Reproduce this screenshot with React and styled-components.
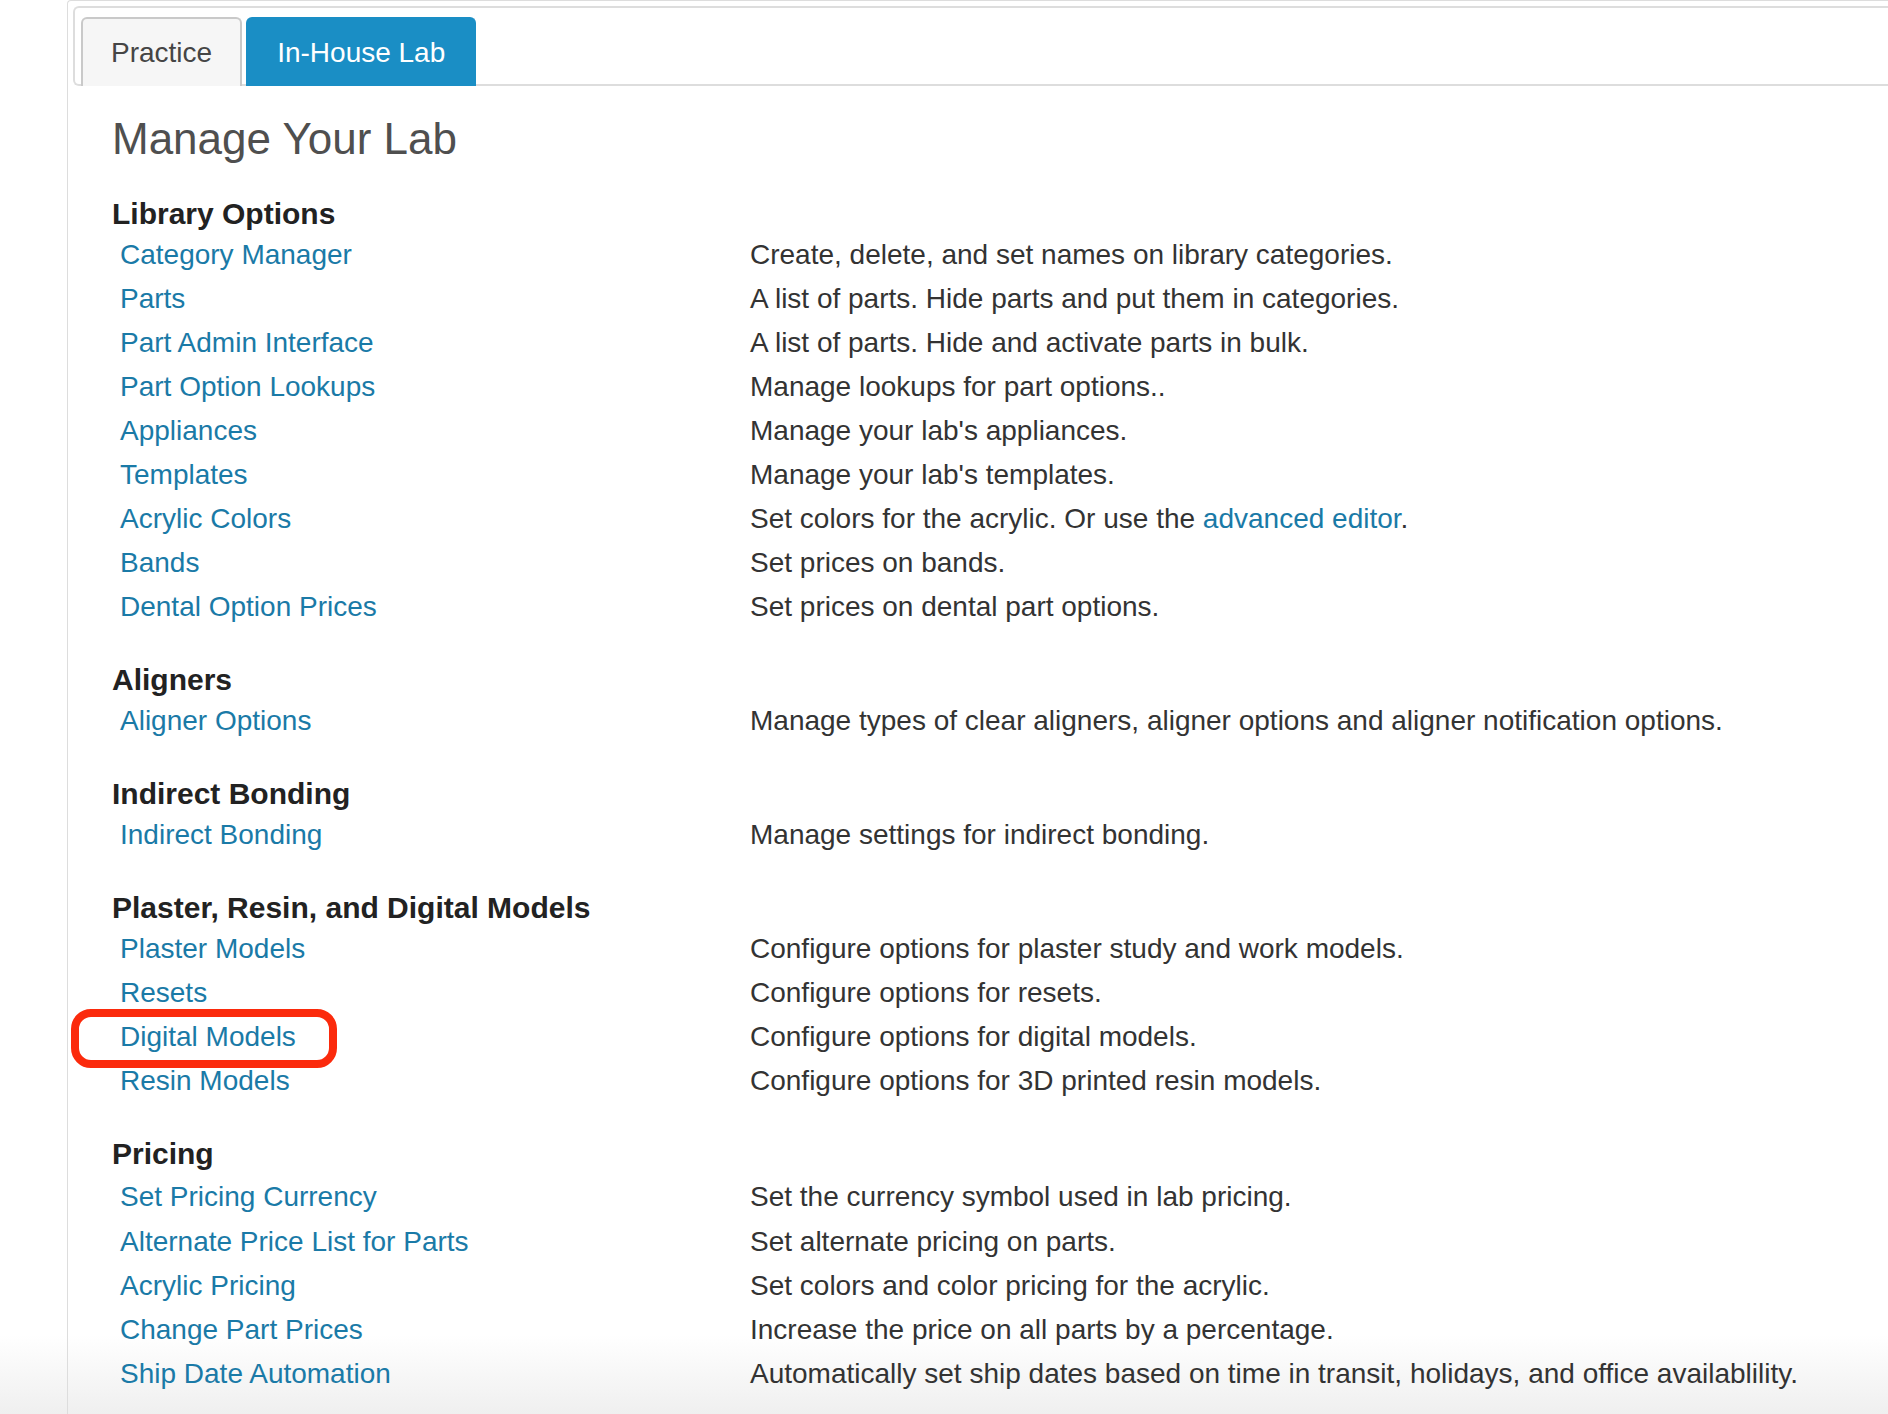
import React from "react";
import styled, { createGlobalStyle } from "styled-components";

const Global = createGlobalStyle`
  html {
    background: linear-gradient(to bottom, #ffffff 0px, #ffffff 1335px, #efefef 1414px);
    min-height: 1414px;
  }
  body {
    margin: 0;
    font-family: "Liberation Sans", Arial, Helvetica, sans-serif;
    overflow: hidden;
    min-height: 1414px;
  }
`;

const Page = styled.div`
  padding-left: 67px;
`;

const TabsFrame = styled.div`
  border: 1px solid #dddddd;
  border-right: none;
  border-radius: 4px 0 0 0;
  padding: 5px 0 0 5px;
  margin-right: -10px;
  min-height: 1420px;
`;

const TabNav = styled.div`
  display: flex;
  gap: 4px;
  align-items: flex-end;
  border: 2px solid #dddddd;
  border-right: none;
  border-radius: 6px 0 0 6px;
  padding: 7px 0 0 6px;
  height: 69px;
`;

const Tab = styled.div`
  box-sizing: border-box;
  height: 69px;
  margin-bottom: -2px;
  padding: 0 ${(p) => (p.$active ? 29 : 28)}px;
  display: flex;
  align-items: center;
  font-size: 28px;
  border-radius: 6px 6px 0 0;
  border: 2px solid ${(p) => (p.$active ? "#1a8ec5" : "#c9c9c9")};
  border-bottom: none;
  background: ${(p) => (p.$active ? "#1a8ec5" : "#f6f6f6")};
  color: ${(p) => (p.$active ? "#ffffff" : "#454545")};
`;

const Panel = styled.div`
  padding: 27px 0 0 39px;
`;

const Title = styled.h1`
  margin: 0 0 30px;
  font-size: 44px;
  line-height: 52px;
  font-weight: 400;
  color: #4f4f4f;
`;

const Section = styled.section`
  margin-bottom: 32px;
`;

const SectionTitle = styled.h3`
  margin: 0;
  font-size: 30px;
  line-height: 38px;
  font-weight: 700;
  color: #222222;
`;

const Row = styled.div`
  position: relative;
  display: grid;
  grid-template-columns: 638px 1fr;
  height: ${(p) => (p.$tall ? 47 : 44)}px;
  align-items: center;
  font-size: 28px;
`;

const LinkCell = styled.a`
  padding-left: 8px;
  color: #1a7aa7;
  text-decoration: none;
  white-space: nowrap;
`;

const Desc = styled.span`
  color: #333333;
  white-space: nowrap;
`;

const InlineLink = styled.a`
  color: #1a7aa7;
  text-decoration: none;
`;

const Highlight = styled.span`
  position: absolute;
  left: -41px;
  top: -6px;
  width: 266px;
  height: 59px;
  box-sizing: border-box;
  border: 8px solid #fb2a0c;
  border-radius: 20px;
  pointer-events: none;
`;

const sections = [
  {
    title: "Library Options",
    rows: [
      ["Category Manager", "Create, delete, and set names on library categories."],
      ["Parts", "A list of parts. Hide parts and put them in categories."],
      ["Part Admin Interface", "A list of parts. Hide and activate parts in bulk."],
      ["Part Option Lookups", "Manage lookups for part options.."],
      ["Appliances", "Manage your lab's appliances."],
      ["Templates", "Manage your lab's templates."],
      ["Acrylic Colors", "ADV"],
      ["Bands", "Set prices on bands."],
      ["Dental Option Prices", "Set prices on dental part options."],
    ],
  },
  {
    title: "Aligners",
    rows: [
      ["Aligner Options", "Manage types of clear aligners, aligner options and aligner notification options."],
    ],
  },
  {
    title: "Indirect Bonding",
    rows: [["Indirect Bonding", "Manage settings for indirect bonding."]],
  },
  {
    title: "Plaster, Resin, and Digital Models",
    rows: [
      ["Plaster Models", "Configure options for plaster study and work models."],
      ["Resets", "Configure options for resets."],
      ["Digital Models", "Configure options for digital models.", "highlight"],
      ["Resin Models", "Configure options for 3D printed resin models."],
    ],
  },
  {
    title: "Pricing",
    rows: [
      ["Set Pricing Currency", "Set the currency symbol used in lab pricing.", "tall"],
      ["Alternate Price List for Parts", "Set alternate pricing on parts."],
      ["Acrylic Pricing", "Set colors and color pricing for the acrylic."],
      ["Change Part Prices", "Increase the price on all parts by a percentage."],
      ["Ship Date Automation", "Automatically set ship dates based on time in transit, holidays, and office availablility."],
    ],
  },
];

export default function App() {
  return (
    <>
      <Global />
      <Page>
        <TabsFrame>
          <TabNav>
            <Tab>Practice</Tab>
            <Tab $active>In-House Lab</Tab>
          </TabNav>
          <Panel>
            <Title>Manage Your Lab</Title>
            {sections.map((s) => (
              <Section key={s.title}>
                <SectionTitle>{s.title}</SectionTitle>
                {s.rows.map(([label, desc, flag]) => (
                  <Row key={label} $tall={flag === "tall"}>
                    <LinkCell href="#">{label}</LinkCell>
                    <Desc>
                      {desc === "ADV" ? (
                        <>
                          Set colors for the acrylic. Or use the{" "}
                          <InlineLink href="#">advanced editor</InlineLink>.
                        </>
                      ) : (
                        desc
                      )}
                    </Desc>
                    {flag === "highlight" && <Highlight />}
                  </Row>
                ))}
              </Section>
            ))}
          </Panel>
        </TabsFrame>
      </Page>
    </>
  );
}
